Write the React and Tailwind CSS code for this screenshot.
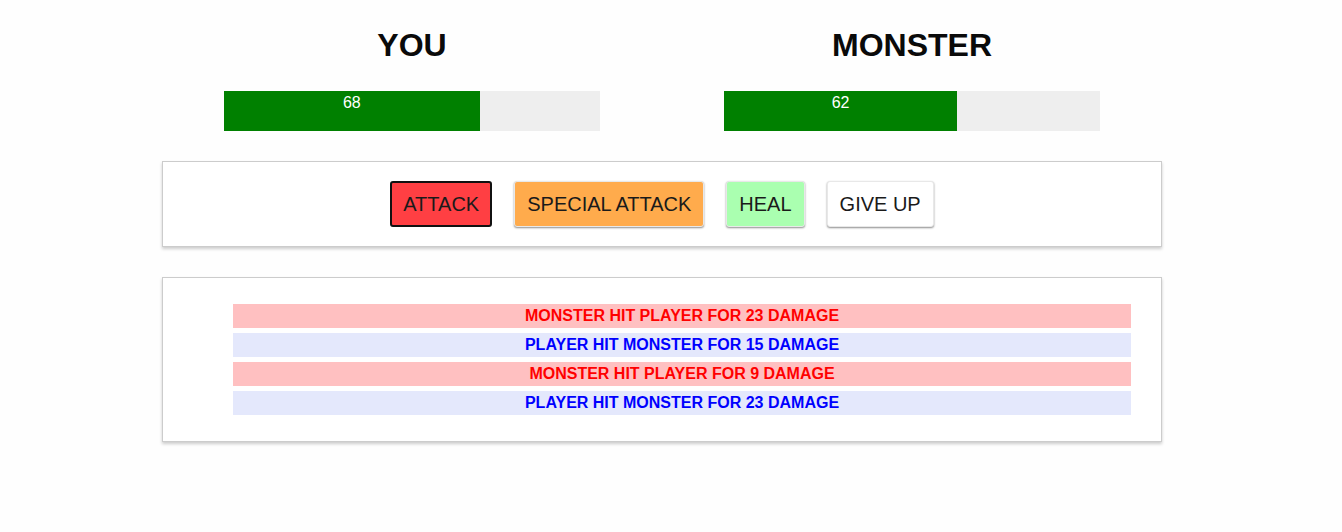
const logs = [
  { monster: true, text: "Monster hit player for 23 damage" },
  { monster: false, text: "Player hit monster for 15 damage" },
  { monster: true, text: "Monster hit player for 9 damage" },
  { monster: false, text: "Player hit monster for 23 damage" },
];

const HealthBar = ({ title, value }) => (
  <div className="flex-1 flex flex-col items-center">
    <h1 className="mt-[27px] text-[32px] leading-[37px] font-bold text-[#0a0a0a]">{title}</h1>
    <div className="mt-[27px] w-[376px] h-10 bg-[#eeeeee]">
      <div className="h-full bg-[#008000] text-white text-center text-base leading-6" style={{ width: `${value}%` }}>
        {value}
      </div>
    </div>
  </div>
);

export default function App() {
  return (
    <div className="min-h-[532px] bg-[#fefefe] pr-[18px]" style={{ fontFamily: '"Liberation Sans", Arial, sans-serif' }}>
      <div className="mx-auto w-[1000px]">
        {/* Health */}
        <section className="flex">
          <HealthBar title="YOU" value={68} />
          <HealthBar title="MONSTER" value={62} />
        </section>

        {/* Controls */}
        <section className="mt-[30px] border border-[#cccccc] shadow-[0_2px_3px_rgba(0,0,0,0.2)] bg-white py-[19px] flex justify-center gap-[22px]">
          <button className="h-[46px] px-[11px] text-[20px] uppercase text-[#1a1a1a] bg-[#ff3f43] border-2 border-[#111] rounded-[3px]">
            Attack
          </button>
          <button className="h-[46px] px-3 text-[20px] uppercase text-[#1a1a1a] bg-[#ffab4c] border border-[#e8e8e8] rounded-[3px] shadow-[0_1px_2px_rgba(0,0,0,0.45)]">
            Special Attack
          </button>
          <button className="h-[46px] px-3 text-[20px] uppercase text-[#1a1a1a] bg-[#aaffb0] border border-[#e8e8e8] rounded-[3px] shadow-[0_1px_2px_rgba(0,0,0,0.45)]">
            Heal
          </button>
          <button className="h-[46px] px-3 text-[20px] uppercase text-[#1a1a1a] bg-white border border-[#e8e8e8] rounded-[3px] shadow-[0_1px_2px_rgba(0,0,0,0.45)]">
            Give up
          </button>
        </section>

        {/* Log */}
        <section className="mt-[30px] border border-[#cccccc] shadow-[0_2px_3px_rgba(0,0,0,0.2)] bg-white pt-[26px] pb-[26px] pl-[70px] pr-[30px]">
          <ul className="flex flex-col gap-[5px]">
            {logs.map((log, i) => (
              <li
                key={i}
                className={`h-6 flex items-center justify-center text-base font-bold uppercase ${
                  log.monster ? "bg-[#ffc0c1] text-[#ff0000]" : "bg-[#e4e8fc] text-[#0000ff]"
                }`}
              >
                {log.text}
              </li>
            ))}
          </ul>
        </section>
      </div>
    </div>
  );
}
